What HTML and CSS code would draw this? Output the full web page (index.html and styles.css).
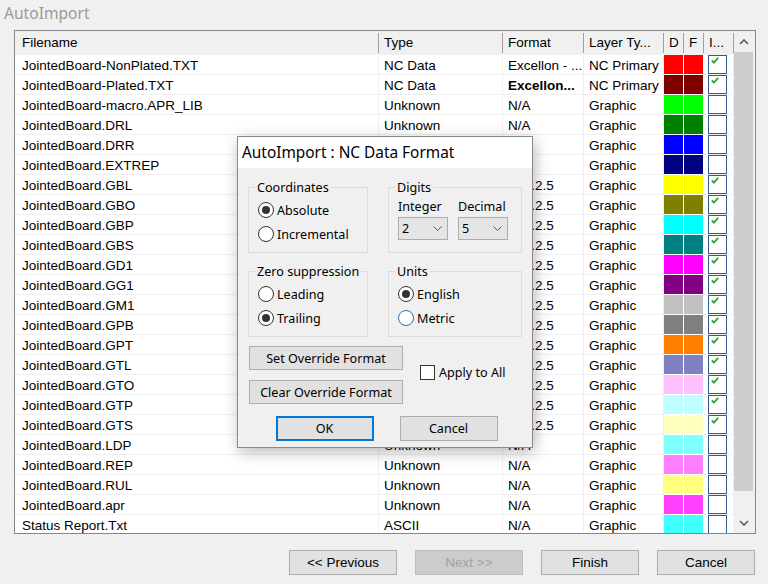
FILE: index.html
```html
<!DOCTYPE html>
<html>
<head>
<meta charset="utf-8">
<link rel="stylesheet" href="styles.css">
</head>
<body>
<div class="app">
  <div class="title">AutoImport</div>
  <div class="listbox">
    <div class="table">
      <div class="row head">
        <div class="c c1">Filename</div><div class="c">Type</div><div class="c">Format</div><div class="c">Layer Ty...</div><div class="c">D</div><div class="c">F</div><div class="c">I...</div>
      </div>
      <div class="row"><div class="c c1">JointedBoard-NonPlated.TXT</div><div class="c">NC Data</div><div class="c">Excellon - ...</div><div class="c">NC Primary</div><div class="c sw" style="background:#ff0000"></div><div class="c sw" style="background:#ff0000"></div><div class="c ck"><span class="box"><svg viewBox="0 0 8 7" width="8" height="7"><polyline points="0.8,3.4 2.8,5.6 7.2,0.8"/></svg></span></div></div>
      <div class="row"><div class="c c1">JointedBoard-Plated.TXT</div><div class="c">NC Data</div><div class="c"><b>Excellon...</b></div><div class="c">NC Primary</div><div class="c sw" style="background:#800000"></div><div class="c sw" style="background:#800000"></div><div class="c ck"><span class="box"><svg viewBox="0 0 8 7" width="8" height="7"><polyline points="0.8,3.4 2.8,5.6 7.2,0.8"/></svg></span></div></div>
      <div class="row"><div class="c c1">JointedBoard-macro.APR_LIB</div><div class="c">Unknown</div><div class="c">N/A</div><div class="c">Graphic</div><div class="c sw" style="background:#00ff00"></div><div class="c sw" style="background:#00ff00"></div><div class="c ck"><span class="box"></span></div></div>
      <div class="row"><div class="c c1">JointedBoard.DRL</div><div class="c">Unknown</div><div class="c">N/A</div><div class="c">Graphic</div><div class="c sw" style="background:#008000"></div><div class="c sw" style="background:#008000"></div><div class="c ck"><span class="box"></span></div></div>
      <div class="row"><div class="c c1">JointedBoard.DRR</div><div class="c"></div><div class="c"></div><div class="c">Graphic</div><div class="c sw" style="background:#0000ff"></div><div class="c sw" style="background:#0000ff"></div><div class="c ck"><span class="box"></span></div></div>
      <div class="row"><div class="c c1">JointedBoard.EXTREP</div><div class="c"></div><div class="c"></div><div class="c">Graphic</div><div class="c sw" style="background:#000080"></div><div class="c sw" style="background:#000080"></div><div class="c ck"><span class="box"></span></div></div>
      <div class="row"><div class="c c1">JointedBoard.GBL</div><div class="c"></div><div class="c">Abs.2.5</div><div class="c">Graphic</div><div class="c sw" style="background:#ffff00"></div><div class="c sw" style="background:#ffff00"></div><div class="c ck"><span class="box"><svg viewBox="0 0 8 7" width="8" height="7"><polyline points="0.8,3.4 2.8,5.6 7.2,0.8"/></svg></span></div></div>
      <div class="row"><div class="c c1">JointedBoard.GBO</div><div class="c"></div><div class="c">Abs.2.5</div><div class="c">Graphic</div><div class="c sw" style="background:#808000"></div><div class="c sw" style="background:#808000"></div><div class="c ck"><span class="box"><svg viewBox="0 0 8 7" width="8" height="7"><polyline points="0.8,3.4 2.8,5.6 7.2,0.8"/></svg></span></div></div>
      <div class="row"><div class="c c1">JointedBoard.GBP</div><div class="c"></div><div class="c">Abs.2.5</div><div class="c">Graphic</div><div class="c sw" style="background:#00ffff"></div><div class="c sw" style="background:#00ffff"></div><div class="c ck"><span class="box"><svg viewBox="0 0 8 7" width="8" height="7"><polyline points="0.8,3.4 2.8,5.6 7.2,0.8"/></svg></span></div></div>
      <div class="row"><div class="c c1">JointedBoard.GBS</div><div class="c"></div><div class="c">Abs.2.5</div><div class="c">Graphic</div><div class="c sw" style="background:#008080"></div><div class="c sw" style="background:#008080"></div><div class="c ck"><span class="box"><svg viewBox="0 0 8 7" width="8" height="7"><polyline points="0.8,3.4 2.8,5.6 7.2,0.8"/></svg></span></div></div>
      <div class="row"><div class="c c1">JointedBoard.GD1</div><div class="c"></div><div class="c">Abs.2.5</div><div class="c">Graphic</div><div class="c sw" style="background:#ff00ff"></div><div class="c sw" style="background:#ff00ff"></div><div class="c ck"><span class="box"><svg viewBox="0 0 8 7" width="8" height="7"><polyline points="0.8,3.4 2.8,5.6 7.2,0.8"/></svg></span></div></div>
      <div class="row"><div class="c c1">JointedBoard.GG1</div><div class="c"></div><div class="c">Abs.2.5</div><div class="c">Graphic</div><div class="c sw" style="background:#800080"></div><div class="c sw" style="background:#800080"></div><div class="c ck"><span class="box"><svg viewBox="0 0 8 7" width="8" height="7"><polyline points="0.8,3.4 2.8,5.6 7.2,0.8"/></svg></span></div></div>
      <div class="row"><div class="c c1">JointedBoard.GM1</div><div class="c"></div><div class="c">Abs.2.5</div><div class="c">Graphic</div><div class="c sw" style="background:#c0c0c0"></div><div class="c sw" style="background:#c0c0c0"></div><div class="c ck"><span class="box"><svg viewBox="0 0 8 7" width="8" height="7"><polyline points="0.8,3.4 2.8,5.6 7.2,0.8"/></svg></span></div></div>
      <div class="row"><div class="c c1">JointedBoard.GPB</div><div class="c"></div><div class="c">Abs.2.5</div><div class="c">Graphic</div><div class="c sw" style="background:#808080"></div><div class="c sw" style="background:#808080"></div><div class="c ck"><span class="box"><svg viewBox="0 0 8 7" width="8" height="7"><polyline points="0.8,3.4 2.8,5.6 7.2,0.8"/></svg></span></div></div>
      <div class="row"><div class="c c1">JointedBoard.GPT</div><div class="c"></div><div class="c">Abs.2.5</div><div class="c">Graphic</div><div class="c sw" style="background:#ff8000"></div><div class="c sw" style="background:#ff8000"></div><div class="c ck"><span class="box"><svg viewBox="0 0 8 7" width="8" height="7"><polyline points="0.8,3.4 2.8,5.6 7.2,0.8"/></svg></span></div></div>
      <div class="row"><div class="c c1">JointedBoard.GTL</div><div class="c"></div><div class="c">Abs.2.5</div><div class="c">Graphic</div><div class="c sw" style="background:#8080c0"></div><div class="c sw" style="background:#8080c0"></div><div class="c ck"><span class="box"><svg viewBox="0 0 8 7" width="8" height="7"><polyline points="0.8,3.4 2.8,5.6 7.2,0.8"/></svg></span></div></div>
      <div class="row"><div class="c c1">JointedBoard.GTO</div><div class="c"></div><div class="c">Abs.2.5</div><div class="c">Graphic</div><div class="c sw" style="background:#ffc0ff"></div><div class="c sw" style="background:#ffc0ff"></div><div class="c ck"><span class="box"><svg viewBox="0 0 8 7" width="8" height="7"><polyline points="0.8,3.4 2.8,5.6 7.2,0.8"/></svg></span></div></div>
      <div class="row"><div class="c c1">JointedBoard.GTP</div><div class="c"></div><div class="c">Abs.2.5</div><div class="c">Graphic</div><div class="c sw" style="background:#c0ffff"></div><div class="c sw" style="background:#c0ffff"></div><div class="c ck"><span class="box"><svg viewBox="0 0 8 7" width="8" height="7"><polyline points="0.8,3.4 2.8,5.6 7.2,0.8"/></svg></span></div></div>
      <div class="row"><div class="c c1">JointedBoard.GTS</div><div class="c"></div><div class="c">Abs.2.5</div><div class="c">Graphic</div><div class="c sw" style="background:#ffffc0"></div><div class="c sw" style="background:#ffffc0"></div><div class="c ck"><span class="box"><svg viewBox="0 0 8 7" width="8" height="7"><polyline points="0.8,3.4 2.8,5.6 7.2,0.8"/></svg></span></div></div>
      <div class="row"><div class="c c1">JointedBoard.LDP</div><div class="c">Unknown</div><div class="c">N/A</div><div class="c">Graphic</div><div class="c sw" style="background:#80ffff"></div><div class="c sw" style="background:#80ffff"></div><div class="c ck"><span class="box"></span></div></div>
      <div class="row"><div class="c c1">JointedBoard.REP</div><div class="c">Unknown</div><div class="c">N/A</div><div class="c">Graphic</div><div class="c sw" style="background:#ff80ff"></div><div class="c sw" style="background:#ff80ff"></div><div class="c ck"><span class="box"></span></div></div>
      <div class="row"><div class="c c1">JointedBoard.RUL</div><div class="c">Unknown</div><div class="c">N/A</div><div class="c">Graphic</div><div class="c sw" style="background:#ffff80"></div><div class="c sw" style="background:#ffff80"></div><div class="c ck"><span class="box"></span></div></div>
      <div class="row"><div class="c c1">JointedBoard.apr</div><div class="c">Unknown</div><div class="c">N/A</div><div class="c">Graphic</div><div class="c sw" style="background:#ff40ff"></div><div class="c sw" style="background:#ff40ff"></div><div class="c ck"><span class="box"></span></div></div>
      <div class="row"><div class="c c1">Status Report.Txt</div><div class="c">ASCII</div><div class="c">N/A</div><div class="c">Graphic</div><div class="c sw" style="background:#40ffff"></div><div class="c sw" style="background:#40ffff"></div><div class="c ck"><span class="box"></span></div></div>
    </div>
    <div class="scroll">
      <div class="sbtn"><svg width="10" height="6" viewBox="0 0 10 6"><polyline points="1,5 5,1 9,5"/></svg></div>
      <div class="thumb"></div>
      <div class="track"></div>
      <div class="sbtn"><svg width="10" height="6" viewBox="0 0 10 6"><polyline points="1,1 5,5 9,1"/></svg></div>
    </div>
  </div>
  <div class="footer">
    <div class="fbtn w108">&lt;&lt; Previous</div>
    <div class="fbtn w108 dis">Next &gt;&gt;</div>
    <div class="fbtn w98">Finish</div>
    <div class="fbtn w98">Cancel</div>
  </div>

  <div class="dialog">
    <div class="dlg-title">AutoImport : NC Data Format</div>
    <div class="dlg-body">
      <div class="groups">
        <fieldset class="grp">
          <legend>Coordinates</legend>
          <div class="radio on"><span class="dot"></span>Absolute</div>
          <div class="radio"><span class="dot"></span>Incremental</div>
        </fieldset>
        <fieldset class="grp">
          <legend>Digits</legend>
          <div class="digits">
            <div class="lbl">Integer</div>
            <div class="lbl">Decimal</div>
            <div class="combo"><span>2</span><svg width="9" height="5" viewBox="0 0 9 5"><polyline points="0.5,0.5 4.5,4.5 8.5,0.5"/></svg></div>
            <div class="combo"><span>5</span><svg width="9" height="5" viewBox="0 0 9 5"><polyline points="0.5,0.5 4.5,4.5 8.5,0.5"/></svg></div>
          </div>
        </fieldset>
        <fieldset class="grp">
          <legend>Zero suppression</legend>
          <div class="radio"><span class="dot"></span>Leading</div>
          <div class="radio on"><span class="dot"></span>Trailing</div>
        </fieldset>
        <fieldset class="grp">
          <legend>Units</legend>
          <div class="radio on"><span class="dot"></span>English</div>
          <div class="radio hover"><span class="dot"></span>Metric</div>
        </fieldset>
      </div>
      <div class="overrides">
        <div class="obtns">
          <div class="dbtn">Set Override Format</div>
          <div class="dbtn">Clear Override Format</div>
        </div>
        <div class="chk"><span class="cbox"></span>Apply to All</div>
      </div>
      <div class="okrow">
        <div class="dbtn okb ok">OK</div>
        <div class="dbtn okb">Cancel</div>
      </div>
    </div>
  </div>
</div>
</body>
</html>
```

FILE: styles.css
```css
body {
  margin: 0;
  background: #f0f0f0;
  font-family: "Liberation Sans", Arial, sans-serif;
  font-size: 13.5px;
  color: #000;
}
.app {
  position: relative;
  width: 768px;
  height: 584px;
  overflow: hidden;
}
.title {
  height: 30px;
  box-sizing: border-box;
  line-height: 26px;
  padding-left: 4px;
  font-family: "Noto Sans", sans-serif;
  font-size: 15.6px;
  color: #9a9a9a;
}
.listbox {
  margin-left: 14px;
  width: 742px;
  height: 504px;
  box-sizing: border-box;
  border: 1px solid #828790;
  background: #fff;
  display: flex;
}
.table {
  width: 719px;
  overflow: hidden;
}
.row {
  display: grid;
  grid-template-columns: 364px 124px 81px 80px 20px 20px 30px;
  height: 20px;
}
.c {
  box-sizing: border-box;
  border-right: 1px solid #f0f0f0;
  border-bottom: 1px solid #f0f0f0;
  padding-left: 5px;
  padding-top: 1px;
  line-height: 19px;
  white-space: nowrap;
  overflow: hidden;
}
.c1 { padding-left: 7px; }
.head { height: 24px; background: #f0f0f0; }
.head .c {
  line-height: 24px;
  padding-top: 0;
  border: none;
  background: linear-gradient(#a0a0a0, #a0a0a0) no-repeat right 0 top 2px / 1px 20px;
}
.sw {
  padding: 0;
  border-right: 1px solid #fff;
  border-bottom: 1px solid #fff;
}
.ck { padding: 0 0 0 4px; }
.box {
  display: block;
  width: 19px;
  height: 19px;
  box-sizing: border-box;
  border: 1px solid #2f5f92;
  background: #fff;
  padding: 1px 0 0 2px;
}
.box svg { display: block; }
.box polyline {
  fill: none;
  stroke: #3a9d3a;
  stroke-width: 1.8;
}
.scroll {
  width: 21px;
  display: flex;
  flex-direction: column;
  background: #f0f0f0;
}
.sbtn {
  height: 21px;
  display: flex;
  align-items: center;
  justify-content: center;
  padding-right: 2px;
}
.sbtn polyline {
  fill: none;
  stroke: #606060;
  stroke-width: 1.7;
}
.thumb {
  height: 439px;
  background: #cdcdcd;
  margin-right: 2px;
}
.track { flex: 1; }
.footer {
  display: flex;
  justify-content: flex-end;
  gap: 18px;
  padding-right: 13px;
  margin-top: 16px;
}
.fbtn {
  height: 25px;
  box-sizing: border-box;
  border: 1px solid #adadad;
  background: #e1e1e1;
  display: flex;
  align-items: center;
  justify-content: center;
}
.w108 { width: 108px; }
.w98 { width: 98px; }
.dis {
  background: #cccccc;
  border-color: #bfbfbf;
  color: #a3a3a3;
}

/* dialog */
.dialog {
  position: absolute;
  left: 237px;
  top: 136px;
  width: 296px;
  height: 312px;
  box-sizing: border-box;
  border: 1px solid #8a8a8a;
  background: #f0f0f0;
  box-shadow: 2px 4px 14px rgba(0, 0, 0, 0.28);
  font-family: "Noto Sans", sans-serif;
  font-size: 12.6px;
}
.dlg-title {
  height: 31px;
  background: #fff;
  line-height: 31px;
  padding-left: 4px;
  font-size: 15.4px;
}
.dlg-body {
  padding: 11px 10px 0 10px;
}
.groups {
  display: grid;
  grid-template-columns: 120px 134px;
  column-gap: 20px;
  row-gap: 10px;
}
.grp {
  margin: 0;
  padding: 2px 0 6px 9px;
  border: 1px solid #dcdcdc;
  min-width: 0;
}
.grp legend {
  padding: 0 2px;
  margin-left: -3px;
  line-height: 17px;
}
.radio {
  display: flex;
  align-items: center;
  height: 24px;
}
.dot {
  width: 16px;
  height: 16px;
  box-sizing: border-box;
  border: 1px solid #333;
  border-radius: 50%;
  background: #fff;
  margin-right: 3px;
  display: flex;
  align-items: center;
  justify-content: center;
}
.on .dot::after {
  content: "";
  width: 8px;
  height: 8px;
  border-radius: 50%;
  background: #333;
}
.hover .dot { border-color: #2c6fb0; }
.digits {
  display: grid;
  grid-template-columns: 50px 50px;
  column-gap: 10px;
  row-gap: 2px;
}
.lbl { line-height: 17px; }
.combo {
  height: 23px;
  box-sizing: border-box;
  border: 1px solid #adadad;
  background: #e5e5e5;
  display: flex;
  align-items: center;
  justify-content: space-between;
  padding: 0 5px 0 3px;
}
.combo polyline {
  fill: none;
  stroke: #555;
  stroke-width: 1;
}
.overrides {
  display: flex;
  margin-top: 9px;
  margin-left: 1px;
}
.obtns {
  display: flex;
  flex-direction: column;
  gap: 10px;
  width: 154px;
}
.dbtn {
  height: 24px;
  box-sizing: border-box;
  border: 1px solid #adadad;
  background: #e1e1e1;
  display: flex;
  align-items: center;
  justify-content: center;
}
.chk {
  margin-left: 17px;
  margin-top: 19px;
  height: 15px;
  display: flex;
  align-items: center;
}
.cbox {
  width: 15px;
  height: 15px;
  box-sizing: border-box;
  border: 1px solid #333;
  background: #fff;
  margin-right: 4px;
}
.okrow {
  display: flex;
  justify-content: center;
  gap: 26px;
  margin-top: 12px;
  padding-left: 3px;
}
.okb {
  width: 98px;
  height: 25px;
}
.ok { border: 2px solid #0078d7; }
```
